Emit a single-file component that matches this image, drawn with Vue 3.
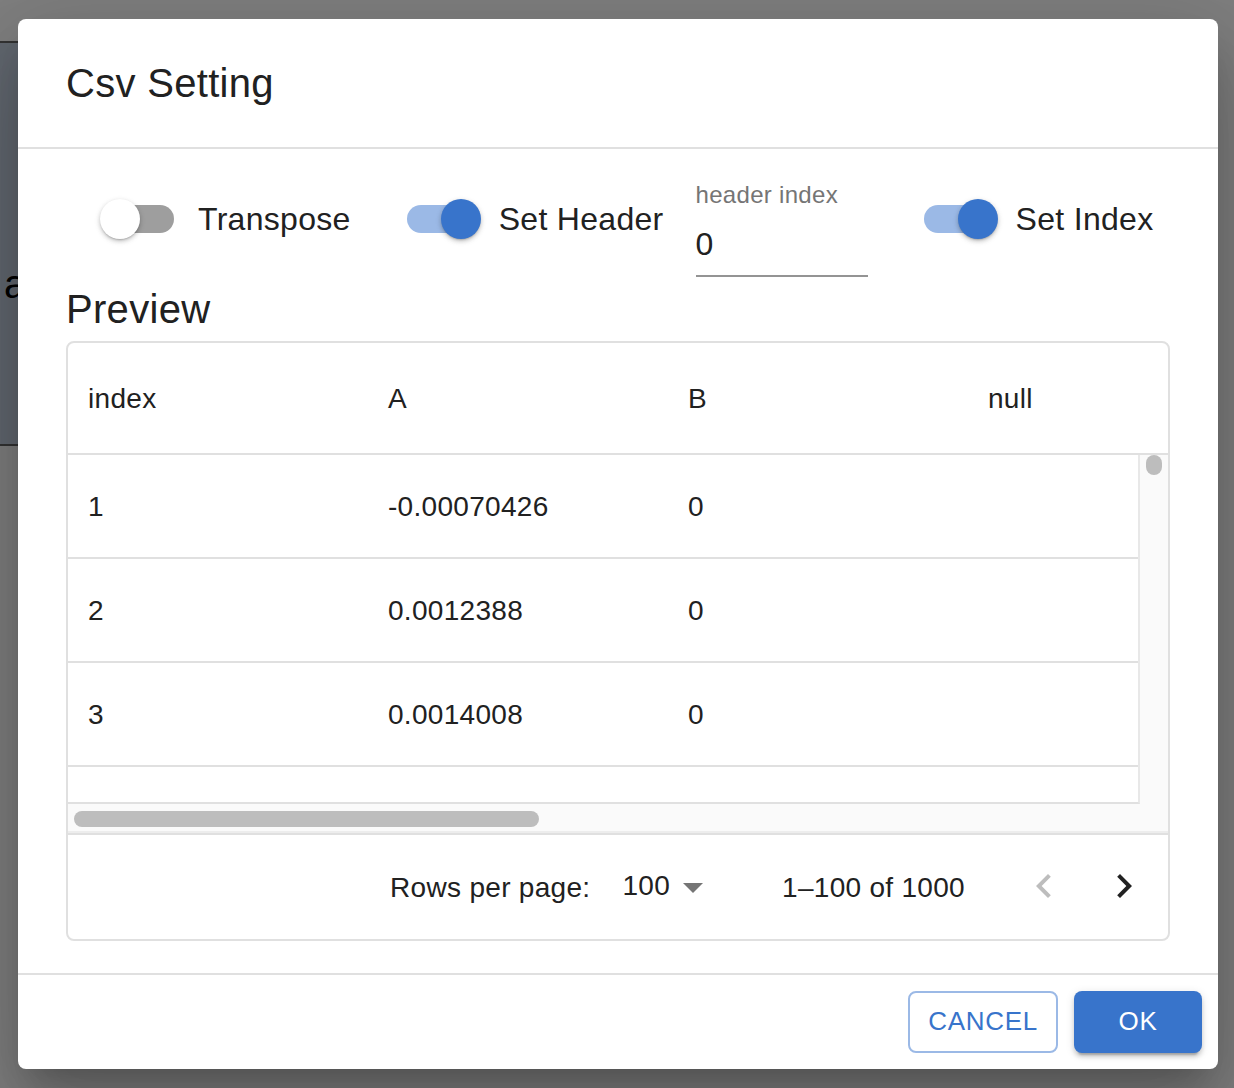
<script setup>
import { ref } from 'vue'

const transpose = ref(false)
const setHeader = ref(true)
const setIndex = ref(true)
const headerIndex = ref('0')

const columns = ['index', 'A', 'B', 'null']
const rows = [
  ['1', '-0.00070426', '0', ''],
  ['2', '0.0012388', '0', ''],
  ['3', '0.0014008', '0', ''],
  ['', '', '', ''],
]
</script>

<template>
  <div class="page">
    <!-- page behind the dialog -->
    <div class="behind">
      <div class="behind-panel"></div>
      <span class="behind-letter">a</span>
    </div>
    <div class="backdrop"></div>

    <div class="dialog">
      <h2 class="dialog-title">Csv Setting</h2>

      <div class="dialog-content">
        <div class="options">
          <label class="switch-item transpose" @click.prevent="transpose = !transpose">
            <span class="switch" :class="{ on: transpose }"><span class="thumb"></span></span>
            <span class="switch-label">Transpose</span>
          </label>
          <label class="switch-item set-header" @click.prevent="setHeader = !setHeader">
            <span class="switch" :class="{ on: setHeader }"><span class="thumb"></span></span>
            <span class="switch-label">Set Header</span>
          </label>
          <div class="text-field">
            <label class="field-label">header index</label>
            <input v-model="headerIndex" type="text" />
          </div>
          <label class="switch-item set-index" @click.prevent="setIndex = !setIndex">
            <span class="switch" :class="{ on: setIndex }"><span class="thumb"></span></span>
            <span class="switch-label">Set Index</span>
          </label>
        </div>

        <h2 class="preview-title">Preview</h2>

        <div class="table-card">
          <div class="table-head row">
            <div v-for="col in columns" :key="col" class="cell">{{ col }}</div>
          </div>

          <div class="table-scroll">
            <div class="table-main">
              <div class="table-body">
                <div v-for="(r, n) in rows" :key="n" class="row body-row">
                  <div v-for="(v, i) in r" :key="i" class="cell">{{ v }}</div>
                </div>
              </div>
              <div class="v-scrollbar"><div class="v-thumb"></div></div>
            </div>
            <div class="h-scrollbar"><div class="h-thumb"></div></div>
          </div>

          <div class="pagination">
            <span class="rows-label">Rows per page:</span>
            <div class="rows-select">
              <span>100</span>
              <svg viewBox="0 0 24 24" width="48" height="48"><path d="M7 10l5 5 5-5z" fill="#757575" /></svg>
            </div>
            <span class="range">1–100 of 1000</span>
            <div class="pager">
              <svg viewBox="0 0 24 24" width="48" height="48"><path d="M15.41 7.41L14 6l-6 6 6 6 1.41-1.41L10.83 12z" fill="#bdbdbd" /></svg>
              <svg viewBox="0 0 24 24" width="48" height="48"><path d="M10 6L8.59 7.41 13.17 12l-4.58 4.59L10 18l6-6z" fill="#212121" /></svg>
            </div>
          </div>
        </div>
      </div>

      <div class="dialog-actions">
        <button class="btn outlined">Cancel</button>
        <button class="btn contained">OK</button>
      </div>
    </div>
  </div>
</template>

<style>
html,
body {
  margin: 0;
  background: #fff;
}
</style>

<style scoped>
.page {
  position: relative;
  width: 1234px;
  height: 1088px;
  overflow: hidden;
  padding: 19px 0 0 18px;
  box-sizing: border-box;
  font-family: 'Liberation Sans', Arial, sans-serif;
  color: #212121;
}

.behind {
  position: absolute;
  inset: 0;
}

.behind-panel {
  position: absolute;
  left: 0;
  top: 41px;
  width: 40px;
  height: 405px;
  box-sizing: border-box;
  background: #c4d0e0;
  border-top: 2px solid #666;
  border-bottom: 2px solid #666;
}

.behind-letter {
  position: absolute;
  left: 4px;
  top: 261px;
  font-size: 40px;
  line-height: 46px;
  color: #000;
}

.backdrop {
  position: absolute;
  inset: 0;
  background: rgba(0, 0, 0, 0.5);
}

.dialog {
  position: relative;
  width: 1200px;
  height: 1050px;
  display: flex;
  flex-direction: column;
  background: #fff;
  border-radius: 8px;
  box-shadow:
    0 22px 30px -14px rgba(0, 0, 0, 0.2),
    0 48px 76px 6px rgba(0, 0, 0, 0.14),
    0 18px 92px 16px rgba(0, 0, 0, 0.12);
}

.dialog-title {
  margin: 0;
  height: 130px;
  box-sizing: border-box;
  padding: 40px 48px 0;
  font-size: 40px;
  line-height: 48px;
  font-weight: 400;
  letter-spacing: 0.3px;
  border-bottom: 2px solid #e0e0e0;
}

.dialog-content {
  flex: 1;
  padding: 0 48px;
  min-height: 0;
}

.options {
  height: 136px;
  display: flex;
  align-items: flex-start;
}

.switch-item {
  display: flex;
  align-items: center;
  height: 40px;
  margin-top: 50px;
  cursor: pointer;
}

.transpose {
  margin-left: 40px;
}

.set-header {
  margin-left: 56px;
}

.set-index {
  margin-left: 56px;
}

.switch {
  position: relative;
  display: block;
  width: 68px;
  height: 28px;
  margin-right: 24px;
  border-radius: 14px;
  background: #9e9e9e;
}

.switch.on {
  background: #9bb9e6;
}

.thumb {
  position: absolute;
  top: -6px;
  left: -6px;
  width: 40px;
  height: 40px;
  border-radius: 50%;
  background: #fff;
  box-shadow:
    0 2px 2px -1px rgba(0, 0, 0, 0.2),
    0 2px 4px 0 rgba(0, 0, 0, 0.14),
    0 2px 6px 0 rgba(0, 0, 0, 0.12);
}

.switch.on .thumb {
  left: 34px;
  background: #3874cb;
}

.switch-label {
  font-size: 32px;
  letter-spacing: 0.3px;
  line-height: 40px;
}

.text-field {
  width: 172px;
  margin-left: 32px;
  margin-top: 32px;
}

.field-label {
  display: block;
  font-size: 24px;
  line-height: 28px;
  color: #757575;
  letter-spacing: 0.3px;
}

.text-field input {
  display: block;
  width: 100%;
  box-sizing: border-box;
  height: 68px;
  margin-top: 0;
  padding: 13px 0 9px;
  border: 0;
  border-bottom: 2px solid #949494;
  outline: none;
  background: none;
  font: 400 32px 'Liberation Sans', Arial, sans-serif;
  color: #212121;
}

.preview-title {
  margin: 0;
  height: 56px;
  font-size: 40px;
  line-height: 48px;
  box-sizing: border-box;
  font-weight: 400;
  letter-spacing: 0.3px;
}

.table-card {
  box-sizing: border-box;
  height: 600px;
  border: 2px solid #e0e0e0;
  border-radius: 8px;
  display: flex;
  flex-direction: column;
}

.row {
  display: flex;
}

.cell {
  width: 300px;
  flex: none;
  box-sizing: border-box;
  padding: 2px 20px 0;
  font-size: 28px;
  letter-spacing: 0.3px;
  white-space: nowrap;
}

.table-head {
  height: 112px;
  flex: none;
  box-sizing: border-box;
  align-items: center;
  border-bottom: 2px solid #e0e0e0;
}

.table-scroll {
  height: 380px;
  flex: none;
  display: flex;
  flex-direction: column;
  background: #fafafa;
  box-sizing: border-box;
  border-bottom: 2px solid #e0e0e0;
}

.table-main {
  height: 349px;
  flex: none;
  display: flex;
}

.table-body {
  flex: 1;
  min-width: 0;
  overflow: hidden;
  background: #fff;
  border-right: 2px solid #e8e8e8;
  border-bottom: 2px solid #e0e0e0;
}

.body-row {
  height: 104px;
  box-sizing: border-box;
  align-items: center;
  border-bottom: 2px solid #e0e0e0;
}

.v-scrollbar {
  width: 28px;
  flex: none;
  box-sizing: border-box;
  padding: 0 6px;
}

.v-thumb {
  height: 20px;
  background: #bdbdbd;
  border-radius: 8px;
}

.h-scrollbar {
  flex: 1;
  box-sizing: border-box;
  padding: 7px 6px 0;
  border-bottom: 2px solid #ededed;
}

.h-thumb {
  width: 465px;
  height: 16px;
  background: #bdbdbd;
  border-radius: 8px;
}

.pagination {
  flex: 1;
  display: flex;
  align-items: center;
  justify-content: flex-end;
  padding-right: 20px;
  font-size: 28px;
  letter-spacing: 0.3px;
}

.rows-label,
.range {
  padding-top: 2px;
}

.rows-select {
  display: flex;
  align-items: center;
  margin-left: 32px;
  margin-right: 77px;
}

.rows-select span {
  margin-bottom: 2px;
}

.rows-select svg {
  margin-right: -12px;
  margin-left: -1px;
}

.pager {
  display: flex;
  gap: 32px;
  margin-left: 55px;
  margin-bottom: 2px;
}

.dialog-actions {
  height: 96px;
  flex: none;
  box-sizing: border-box;
  display: flex;
  justify-content: flex-end;
  gap: 16px;
  padding: 16px 16px 0;
  border-top: 2px solid #e0e0e0;
}

.btn {
  height: 62px;
  border-radius: 8px;
  padding: 0 0 2px;
  font: 400 26px 'Liberation Sans', Arial, sans-serif;
  letter-spacing: 0.7px;
  text-transform: uppercase;
  cursor: pointer;
}

.outlined {
  width: 150px;
  background: #fff;
  color: #3874cb;
  border: 2px solid #9bb9e6;
}

.contained {
  width: 128px;
  background: #3874cb;
  color: #fff;
  border: 0;
  box-shadow:
    0 6px 2px -4px rgba(0, 0, 0, 0.2),
    0 4px 4px 0 rgba(0, 0, 0, 0.14),
    0 2px 10px 0 rgba(0, 0, 0, 0.12);
}
</style>
